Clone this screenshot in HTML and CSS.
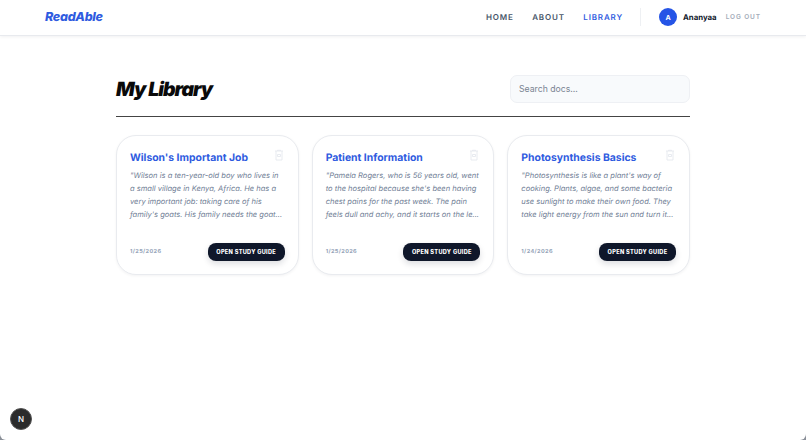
FILE: index.html
```html
<!DOCTYPE html>
<html lang="en">
<head>
    <meta charset="UTF-8">
    <meta name="viewport" content="width=device-width, initial-scale=1.0">
    <title>My Library</title>
    <link rel="stylesheet" href="styles.css">
</head>
<body>
    <header class="navbar">
        <a class="logo" href="#">ReadAble</a>
        <nav class="nav-links">
            <a href="#">Home</a>
            <a href="#">About</a>
            <a class="active" href="#">Library</a>
        </nav>
        <div class="user-area">
            <span class="avatar">A</span>
            <span class="user-name">Ananyaa</span>
            <button class="logout" type="button">Log out</button>
        </div>
    </header>

    <main class="library">
        <div class="library-head">
            <h1>My Library</h1>
            <input class="search" type="text" placeholder="Search docs...">
        </div>

        <section class="card-grid">
            <article class="doc-card">
                <div class="card-top">
                    <h2>Wilson's Important Job</h2>
                    <svg class="trash" viewBox="0 0 24 24"><path d="M9 4V2.5h6V4M4 4h16M6 4v18h12V4M9 11h6v4H9z"/></svg>
                </div>
                <p>"Wilson is a ten-year-old boy who lives in a small village in Kenya, Africa. He has a very important job: taking care of his family's goats. His family needs the goat...</p>
                <div class="card-foot">
                    <span class="date">1/25/2026</span>
                    <button class="open-btn" type="button">Open Study Guide</button>
                </div>
            </article>
            <article class="doc-card">
                <div class="card-top">
                    <h2>Patient Information</h2>
                    <svg class="trash" viewBox="0 0 24 24"><path d="M9 4V2.5h6V4M4 4h16M6 4v18h12V4M9 11h6v4H9z"/></svg>
                </div>
                <p>"Pamela Rogers, who is 56 years old, went to the hospital because she's been having chest pains for the past week. The pain feels dull and achy, and it starts on the le...</p>
                <div class="card-foot">
                    <span class="date">1/25/2026</span>
                    <button class="open-btn" type="button">Open Study Guide</button>
                </div>
            </article>
            <article class="doc-card">
                <div class="card-top">
                    <h2>Photosynthesis Basics</h2>
                    <svg class="trash" viewBox="0 0 24 24"><path d="M9 4V2.5h6V4M4 4h16M6 4v18h12V4M9 11h6v4H9z"/></svg>
                </div>
                <p>"Photosynthesis is like a plant's way of cooking. Plants, algae, and some bacteria use sunlight to make their own food. They take light energy from the sun and turn it...</p>
                <div class="card-foot">
                    <span class="date">1/24/2026</span>
                    <button class="open-btn" type="button">Open Study Guide</button>
                </div>
            </article>
        </section>
    </main>

    <button class="dev-badge" type="button">N</button>
</body>
</html>
```

FILE: styles.css
```css
* {
    margin: 0;
    padding: 0;
    box-sizing: border-box;
}

html {
    background: #8a8f98;
}

body {
    height: 100vh;
    overflow: hidden;
    border-radius: 0 0 6px 6px;
    background: #fff;
    font-family: 'Inter', sans-serif;
    text-rendering: geometricPrecision;
    color: #0f172a;
}

a {
    text-decoration: none;
}

/* Top navigation */
.navbar {
    display: flex;
    align-items: center;
    height: 36px;
    padding: 0 45px 1px;
    border-bottom: 1px solid #e8eaee;
    box-shadow: 0 1px 3px rgba(15, 23, 42, 0.06);
}

.logo {
    font-size: 12.5px;
    font-weight: 800;
    font-style: italic;
    letter-spacing: -0.3px;
    color: #2f5be0;
}

.nav-links {
    display: flex;
    gap: 18.5px;
    margin-left: auto;
}

.nav-links a {
    font-size: 8px;
    font-weight: 600;
    letter-spacing: 0.85px;
    text-transform: uppercase;
    color: #475569;
}

.nav-links a.active {
    color: #2f5be0;
}

.user-area {
    display: flex;
    align-items: center;
    height: 18px;
    margin-left: 17px;
    padding-left: 18px;
    border-left: 1px solid #eef0f3;
}

.avatar {
    display: flex;
    justify-content: center;
    align-items: center;
    width: 18px;
    height: 18px;
    border-radius: 50%;
    background: #2554e6;
    color: #fff;
    font-size: 7px;
    font-weight: 700;
}

.user-name {
    margin-left: 6px;
    font-size: 7.8px;
    font-weight: 700;
    color: #0f172a;
}

.logout {
    margin-left: 9px;
    border: none;
    background: none;
    font-family: inherit;
    font-size: 6.5px;
    font-weight: 600;
    letter-spacing: 0.9px;
    text-transform: uppercase;
    color: #a3acb9;
}

/* Library page */
.library {
    width: 574px;
    margin: 0 auto;
    padding-top: 39px;
}

.library-head {
    display: flex;
    justify-content: space-between;
    align-items: center;
    padding-bottom: 13px;
    border-bottom: 1px solid #444;
}

.library-head h1 {
    font-size: 19.5px;
    font-weight: 900;
    font-style: italic;
    letter-spacing: -1px;
    color: #0a0a0a;
}

.search {
    width: 180px;
    height: 28px;
    padding: 0 8px;
    border: 1px solid #eef0f4;
    border-radius: 7px;
    background: #f8fafc;
    font-family: inherit;
    font-size: 8.7px;
}

.search::placeholder {
    color: #7a8492;
}

.card-grid {
    display: grid;
    grid-template-columns: repeat(3, 1fr);
    gap: 13px;
    margin-top: 18px;
}

.doc-card {
    display: flex;
    flex-direction: column;
    height: 140px;
    padding: 15px 13px 13px;
    border: 1px solid #e9ebef;
    border-radius: 20px;
    background: #fff;
    box-shadow: 0 1px 3px rgba(15, 23, 42, 0.05);
}

.card-top {
    display: flex;
    justify-content: space-between;
    align-items: flex-start;
}

.card-top h2 {
    font-size: 10.4px;
    font-weight: 700;
    line-height: 14px;
    color: #2f5be0;
}

.trash {
    flex-shrink: 0;
    width: 12px;
    height: 12px;
    margin-top: -2px;
    fill: none;
    stroke: #e2e6ec;
    stroke-width: 1.6;
}

.doc-card p {
    margin-top: 5px;
    font-size: 7.55px;
    font-style: italic;
    line-height: 12.9px;
    color: #718096;
}

.card-foot {
    display: flex;
    justify-content: space-between;
    align-items: center;
    margin-top: auto;
}

.date {
    font-size: 5.5px;
    font-weight: 700;
    letter-spacing: 0.4px;
    color: #94a3b8;
}

.open-btn {
    width: 77px;
    height: 18px;
    border: none;
    border-radius: 8px;
    background: #0f172a;
    color: #fff;
    font-family: inherit;
    font-size: 5.6px;
    font-weight: 800;
    letter-spacing: 0.3px;
    text-transform: uppercase;
    box-shadow: 0 3px 6px rgba(15, 23, 42, 0.14);
}

/* Dev tools indicator, floats over the page */
.dev-badge {
    position: absolute;
    left: 10px;
    bottom: 10px;
    width: 22px;
    height: 22px;
    border: 1px solid #555;
    border-radius: 50%;
    background: #2b2b2b;
    color: #fff;
    font-family: inherit;
    font-size: 8px;
    font-weight: 500;
}
```
